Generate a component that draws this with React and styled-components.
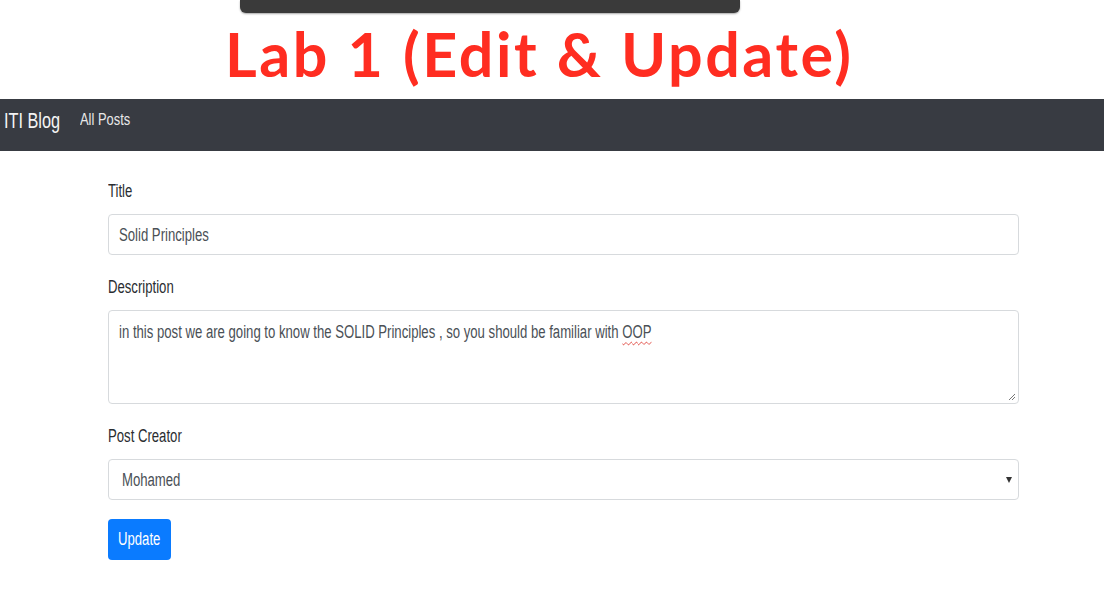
import React from "react";
import styled, { createGlobalStyle } from "styled-components";

const Global = createGlobalStyle`
  html, body {
    margin: 0;
    padding: 0;
    background: #ffffff;
  }
  body {
    font-family: "Liberation Sans", Arial, sans-serif;
  }
`;

const Page = styled.div`
  width: 1104px;
  height: 593px;
  overflow: hidden;
  display: flex;
  flex-direction: column;
`;

const Banner = styled.header`
  display: flex;
  flex-direction: column;
  height: 99px;
`;

const TopBar = styled.div`
  margin-left: 240px;
  width: 500px;
  height: 13px;
  background: #3a3a3a;
  border-radius: 0 0 6px 6px;
  box-shadow: 0 1px 2px rgba(0, 0, 0, 0.35);
`;

const Heading = styled.h1`
  margin: 9px 0 0 225px;
  font-family: Lato, "Open Sans", sans-serif;
  font-weight: 700;
  font-size: 61px;
  line-height: 64px;
  color: #ff2d21;
  letter-spacing: 2.6px;
  white-space: nowrap;
`;

/* the screenshot was squeezed sideways, so text is narrowed to match */
const Narrow = styled.span`
  display: inline-block;
  white-space: nowrap;
  transform: scaleX(${(p) => p.$x || 0.73});
  transform-origin: left center;
`;

const Navbar = styled.nav`
  height: 52px;
  background: #383b42;
  display: flex;
  align-items: center;
  padding-left: 4px;
`;

const Brand = styled.span`
  color: #f4f4f4;
  font-size: 22px;
  width: 76px;
  padding-bottom: 8px;
`;

const NavLink = styled.span`
  color: #e8e8e8;
  font-size: 17px;
  padding-bottom: 10px;
`;

const Form = styled.form`
  margin-left: 108px;
  width: 911px;
  padding-top: 28px;
  display: flex;
  flex-direction: column;
`;

const Label = styled.label`
  display: block;
  font-size: 18px;
  line-height: 24px;
  color: #2a2d31;
  margin-top: ${(p) => (p.$first ? "0" : "20px")};
  margin-bottom: 11px;
`;

const Field = styled.div`
  position: relative;
  box-sizing: border-box;
  height: ${(p) => p.$h}px;
  border: 1px solid #d7dadd;
  border-radius: 4px;
  padding: ${(p) => (p.$area ? "10px 10px" : "0 10px")};
  display: flex;
  align-items: ${(p) => (p.$area ? "flex-start" : "center")};
  font-size: 18px;
  line-height: 22px;
  color: #4a5056;
`;

const Misspelled = styled.span`
  text-decoration: underline wavy #e0443a;
  text-decoration-thickness: 1px;
  text-underline-offset: 3px;
`;

const Grip = styled.svg`
  position: absolute;
  right: 2px;
  bottom: 2px;
`;

const Arrow = styled.span`
  position: absolute;
  right: 6px;
  top: 17px;
  width: 0;
  height: 0;
  border-left: 3px solid transparent;
  border-right: 3px solid transparent;
  border-top: 6px solid #333;
`;

const SelectText = styled.span`
  padding-left: 3px;
`;

const Button = styled.button`
  margin-top: 19px;
  align-self: flex-start;
  width: 63px;
  height: 41px;
  background: #0a7bff;
  color: #ffffff;
  border: none;
  border-radius: 4px;
  font-family: inherit;
  font-size: 18px;
  padding: 0 0 0 10px;
  text-align: left;
`;

export default function App() {
  return (
    <Page>
      <Global />
      <Banner>
        <TopBar />
        <Heading>Lab 1 (Edit &amp; Update)</Heading>
      </Banner>
      <Navbar>
        <Brand>
          <Narrow $x={0.74}>ITI Blog</Narrow>
        </Brand>
        <NavLink>
          <Narrow $x={0.76}>All Posts</Narrow>
        </NavLink>
      </Navbar>
      <Form onSubmit={(e) => e.preventDefault()}>
        <Label $first>
          <Narrow>Title</Narrow>
        </Label>
        <Field $h={41}>
          <Narrow>Solid Principles</Narrow>
        </Field>
        <Label>
          <Narrow>Description</Narrow>
        </Label>
        <Field $h={94} $area>
          <Narrow>
            in this post we are going to know the SOLID Principles , so you should be familiar with{" "}
            <Misspelled>OOP</Misspelled>
          </Narrow>
          <Grip width="9" height="9" viewBox="0 0 9 9">
            <path d="M8 2 L2 8 M8 5 L5 8" stroke="#777" strokeWidth="1" />
          </Grip>
        </Field>
        <Label>
          <Narrow>Post Creator</Narrow>
        </Label>
        <Field $h={41}>
          <SelectText>
            <Narrow>Mohamed</Narrow>
          </SelectText>
          <Arrow />
        </Field>
        <Button type="submit">
          <Narrow>Update</Narrow>
        </Button>
      </Form>
    </Page>
  );
}
